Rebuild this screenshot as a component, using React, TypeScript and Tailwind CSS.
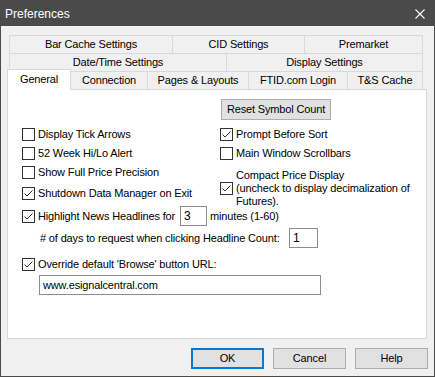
import React from "react";

function Check({ on }: { on?: boolean }) {
  return (
    <div className="w-[13px] h-[13px] border border-[#333333] bg-white shrink-0 flex items-center justify-center">
      {on && (
        <svg width="11" height="11" viewBox="0 0 11 11">
          <polyline points="1.5,5.5 4,8 9.5,2.5" fill="none" stroke="#333333" strokeWidth="1" />
        </svg>
      )}
    </div>
  );
}

function Row({ on, label }: { on?: boolean; label: string }) {
  return (
    <div className="h-[19px] flex items-center">
      <Check on={on} />
      <span className="ml-[3px] whitespace-nowrap">{label}</span>
    </div>
  );
}

function Btn({ label, primary }: { label: string; primary?: boolean }) {
  return (
    <div
      className={
        primary
          ? "w-[73px] h-[21px] bg-[#e1e1e1] border-2 border-[#0078d7] flex items-center justify-center"
          : "w-[73px] h-[21px] bg-[#e1e1e1] border border-[#adadad] flex items-center justify-center"
      }
    >
      {label}
    </div>
  );
}

export default function App() {
  return (
    <div
      className="w-[435px] h-[377px] border border-[#4a4a4a] bg-[#f0f0f0] text-[11px] tracking-[-0.15px] text-black flex flex-col overflow-hidden"
      style={{ fontFamily: '"Liberation Sans", Arial, sans-serif' }}
    >
      {/* Title bar */}
      <div className="h-[25px] bg-[#4a4a4a] flex items-center justify-between pl-[4px] pr-[9px] text-white text-[12px] tracking-normal">
        <span>Preferences</span>
        <svg width="10" height="10" viewBox="0 0 10 10">
          <path d="M0.5 0.5 L9.5 9.5 M9.5 0.5 L0.5 9.5" stroke="#ffffff" strokeWidth="1.1" />
        </svg>
      </div>

      <div className="pt-[9px] flex flex-col">
        {/* Tab rows */}
        <div className="ml-[8px] w-[414px] h-[19px] flex border border-[#d9d9d9]">
          <div className="w-[163px] border-r border-[#d9d9d9] flex items-center justify-center">Bar Cache Settings</div>
          <div className="w-[132px] border-r border-[#d9d9d9] flex items-center justify-center">CID Settings</div>
          <div className="flex-1 flex items-center justify-center">Premarket</div>
        </div>
        <div className="ml-[8px] w-[414px] h-[18px] flex border-x border-b border-[#d9d9d9]">
          <div className="w-[217px] border-r border-[#d9d9d9] flex items-center justify-center">Date/Time Settings</div>
          <div className="flex-1 flex items-center justify-center">Display Settings</div>
        </div>
        <div className="ml-[6px] h-[17px] flex items-start">
          <div className="relative z-10 -mt-[3px] w-[64px] h-[21px] bg-white border-t border-x border-[#d9d9d9] flex items-center pl-[12px] pb-[2px]">
            General
          </div>
          <div className="w-[77px] h-[17px] border-r border-[#d9d9d9] flex items-center justify-center">Connection</div>
          <div className="w-[101px] h-[17px] border-r border-[#d9d9d9] flex items-center justify-center">Pages &amp; Layouts</div>
          <div className="w-[99px] h-[17px] border-r border-[#d9d9d9] flex items-center justify-center">FTID.com Login</div>
          <div className="w-[75px] h-[17px] border-r border-[#d9d9d9] flex items-center justify-center">T&amp;S Cache</div>
        </div>

        {/* Panel */}
        <div className="ml-[6px] w-[420px] h-[250px] border border-[#d9d9d9] bg-white flex flex-col">
          <div className="ml-[213px] mt-[9px] w-[110px] h-[21px] bg-[#e1e1e1] border border-[#adadad] flex items-center justify-center">
            Reset Symbol Count
          </div>

          <div className="mt-[5px] h-[81px] flex items-start">
            <div className="ml-[14px] w-[198px] flex flex-col">
              <Row label="Display Tick Arrows" />
              <Row label="52 Week Hi/Lo Alert" />
              <Row label="Show Full Price Precision" />
              <div className="mt-[2px]">
                <Row on label="Shutdown Data Manager on Exit" />
              </div>
            </div>
            <div className="flex flex-col">
              <Row on label="Prompt Before Sort" />
              <Row label="Main Window Scrollbars" />
              <div className="mt-[6px] flex items-center">
                <Check on />
                <div className="ml-[3px] leading-[13px]">
                  Compact Price Display
                  <br />
                  (uncheck to display decimalization of
                  <br />
                  Futures).
                </div>
              </div>
            </div>
          </div>

          <div className="ml-[14px] h-[20px] flex items-center">
            <Check on />
            <span className="ml-[3px] w-[142px] whitespace-nowrap">Highlight News Headlines for</span>
            <div className="w-[27px] h-[20px] border border-[#8c8c8c] flex items-center pl-[3px] text-[12px]">3</div>
            <span className="ml-[3px]">minutes (1-60)</span>
          </div>

          <div className="ml-[32px] mt-[2px] h-[20px] flex items-center">
            <span className="w-[249px] whitespace-nowrap">
              # of days to request when clicking Headline Count:
            </span>
            <div className="w-[29px] h-[20px] border border-[#8c8c8c] flex items-center pl-[3px] text-[12px]">1</div>
          </div>

          <div className="ml-[14px] mt-[6px] h-[20px] flex items-center">
            <Check on />
            <span className="ml-[3px]">Override default 'Browse' button URL:</span>
          </div>

          <div className="ml-[31px] mt-[1px] w-[282px] h-[20px] border border-[#8c8c8c] flex items-center pl-[3px]">
            www.esignalcentral.com
          </div>
        </div>

        {/* Buttons */}
        <div className="mt-[9px] pr-[6px] flex justify-end gap-[9px]">
          <Btn label="OK" primary />
          <Btn label="Cancel" />
          <Btn label="Help" />
        </div>
      </div>
    </div>
  );
}
